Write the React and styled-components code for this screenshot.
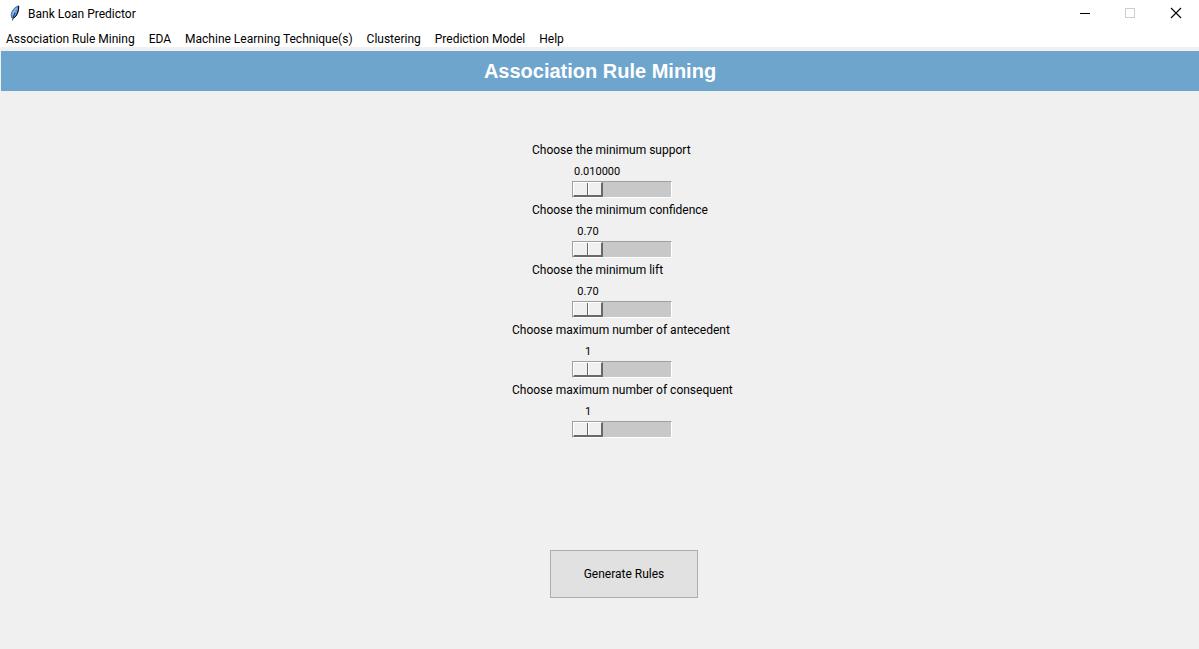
import React, { useState } from "react";
import styled, { createGlobalStyle } from "styled-components";

const GlobalStyle = createGlobalStyle`
  *, *::before, *::after { box-sizing: border-box; }
  body {
    margin: 0;
    background: #f0f0f0;
    color: #000;
    font: 12px/20px Roboto, "Open Sans", sans-serif;
  }
`;

const Window = styled.div`
  min-height: 100vh;
  display: flex;
  flex-direction: column;
  background: #f0f0f0;
`;

const TitleBar = styled.header`
  display: flex;
  align-items: center;
  height: 28px;
  padding-left: 8px;
  background: #fff;
`;

const Feather = styled.svg`
  width: 14px;
  height: 18px;
  margin-right: 6px;
`;

const WindowTitle = styled.span`
  flex: 1;
  white-space: nowrap;
`;

const CaptionButton = styled.button`
  display: flex;
  align-items: center;
  justify-content: center;
  width: 46px;
  height: 26px;
  padding: 0;
  border: 0;
  background: transparent;
  color: #000;

  &:disabled { color: #ccc; }

  svg { width: 12px; height: 12px; }
`;

const CaptionButtons = styled.div`
  display: flex;
  align-self: flex-start;
`;

const MenuBar = styled.nav`
  display: flex;
  gap: 14px;
  height: 19px;
  padding: 0 6px;
  background: #fff;
  line-height: 22px;
`;

const MenuLink = styled.a`
  color: #000;
  text-decoration: none;
  white-space: nowrap;
`;

const Banner = styled.h1`
  margin: 4px 0 0 1px;
  background: #6ea5cd;
  color: #fff;
  font: bold 20px/40px "Liberation Sans", Arial, sans-serif;
  text-align: center;
`;

const Main = styled.main`
  display: flex;
  flex-direction: column;
  align-items: center;
  gap: 110px;
  margin-left: 1px;
  padding: 49px 0 48px 48px;
`;

const Form = styled.form`
  display: flex;
  flex-direction: column;
  width: 224px;
`;

const Field = styled.div`
  display: flex;
  flex-direction: column;
  align-items: flex-start;
  height: 60px;
`;

const FieldLabel = styled.label`
  padding-left: ${({ $indent }) => ($indent ? "20px" : "0")};
  line-height: 20px;
  white-space: nowrap;
`;

const Value = styled.output`
  min-width: 28px;
  margin-left: 62px;
  padding-top: 3px;
  font-size: 11px;
  line-height: 18px;
  text-align: center;
`;

const Slider = styled.input`
  appearance: none;
  display: block;
  width: 100px;
  height: 17px;
  margin: 0 0 0 60px;
  border: 1px solid;
  border-color: #a0a0a0 #fff #fff #a0a0a0;
  background: #c8c8c8;

  &::-webkit-slider-thumb {
    appearance: none;
    width: 30px;
    height: 15px;
    border: solid;
    border-width: 1px 2px 2px 1px;
    border-color: #fff #696969 #696969 #fff;
    background:
      linear-gradient(#696969, #696969) 13px 0 / 1px 100% no-repeat,
      linear-gradient(#fff, #fff) 14px 0 / 1px 100% no-repeat,
      #f0f0f0;
  }
`;

const GenerateButton = styled.button`
  width: 148px;
  height: 48px;
  border: 1px solid #adadad;
  background: #e1e1e1;
  color: #000;
  font: inherit;
`;

const menuItems = [
  "Association Rule Mining",
  "EDA",
  "Machine Learning Technique(s)",
  "Clustering",
  "Prediction Model",
  "Help",
];

const fields = [
  { id: "support", label: "Choose the minimum support", min: 0.01, max: 1, step: 0.000001, digits: 6, indent: true },
  { id: "confidence", label: "Choose the minimum confidence", min: 0.7, max: 1, step: 0.01, digits: 2, indent: true },
  { id: "lift", label: "Choose the minimum lift", min: 0.7, max: 5, step: 0.01, digits: 2, indent: true },
  { id: "antecedent", label: "Choose maximum number of antecedent", min: 1, max: 10, step: 1, digits: 0 },
  { id: "consequent", label: "Choose maximum number of consequent", min: 1, max: 10, step: 1, digits: 0 },
];

function ScaleField({ id, label, min, max, step, digits, indent }) {
  const [value, setValue] = useState(min);
  return (
    <Field>
      <FieldLabel htmlFor={id} $indent={indent}>{label}</FieldLabel>
      <Value htmlFor={id}>{value.toFixed(digits)}</Value>
      <Slider
        id={id}
        type="range"
        min={min}
        max={max}
        step={step}
        value={value}
        onChange={(e) => setValue(Number(e.target.value))}
      />
    </Field>
  );
}

export default function App() {
  return (
    <Window>
      <GlobalStyle />
      <TitleBar>
        <Feather viewBox="0 0 14 18" aria-hidden="true">
          <path d="M10.6 .8 C7.5 1.5 3.6 5.5 3.2 9.5 L3.6 12.6 L5.6 13.2 C8.8 10.8 11 6.5 10.6 .8Z" fill="#5f9be0" stroke="#4b5666" strokeWidth=".8" />
          <path d="M10.7 1 C11 6 9 10.5 6 13" fill="none" stroke="#000" strokeWidth="1" />
          <path d="M8.6 3 C6.8 5 5.2 7.4 4.6 10" fill="none" stroke="#a9cdf5" strokeWidth="1" />
          <path d="M7 8 C6 10 5.2 12 4.6 15.4" fill="none" stroke="#13233d" strokeWidth=".9" />
        </Feather>
        <WindowTitle>Bank Loan Predictor</WindowTitle>
        <CaptionButtons>
          <CaptionButton type="button" aria-label="Minimize">
            <svg viewBox="0 0 12 12" shapeRendering="crispEdges"><path d="M2 6.5H12" stroke="currentColor" /></svg>
          </CaptionButton>
          <CaptionButton type="button" aria-label="Maximize" disabled>
            <svg viewBox="0 0 12 12" shapeRendering="crispEdges"><path d="M1.5 1.5H10.5V10.5H1.5Z" fill="none" stroke="currentColor" /></svg>
          </CaptionButton>
          <CaptionButton type="button" aria-label="Close">
            <svg viewBox="0 0 12 12"><path d="M1 1L11 11M11 1L1 11" stroke="currentColor" strokeWidth="1.1" /></svg>
          </CaptionButton>
        </CaptionButtons>
      </TitleBar>
      <MenuBar>
        {menuItems.map((item) => (
          <MenuLink key={item} href="#">{item}</MenuLink>
        ))}
      </MenuBar>
      <Banner>Association Rule Mining</Banner>
      <Main>
        <Form id="rules">
          {fields.map((field) => (
            <ScaleField key={field.id} {...field} />
          ))}
        </Form>
        <GenerateButton type="button">Generate Rules</GenerateButton>
      </Main>
    </Window>
  );
}
